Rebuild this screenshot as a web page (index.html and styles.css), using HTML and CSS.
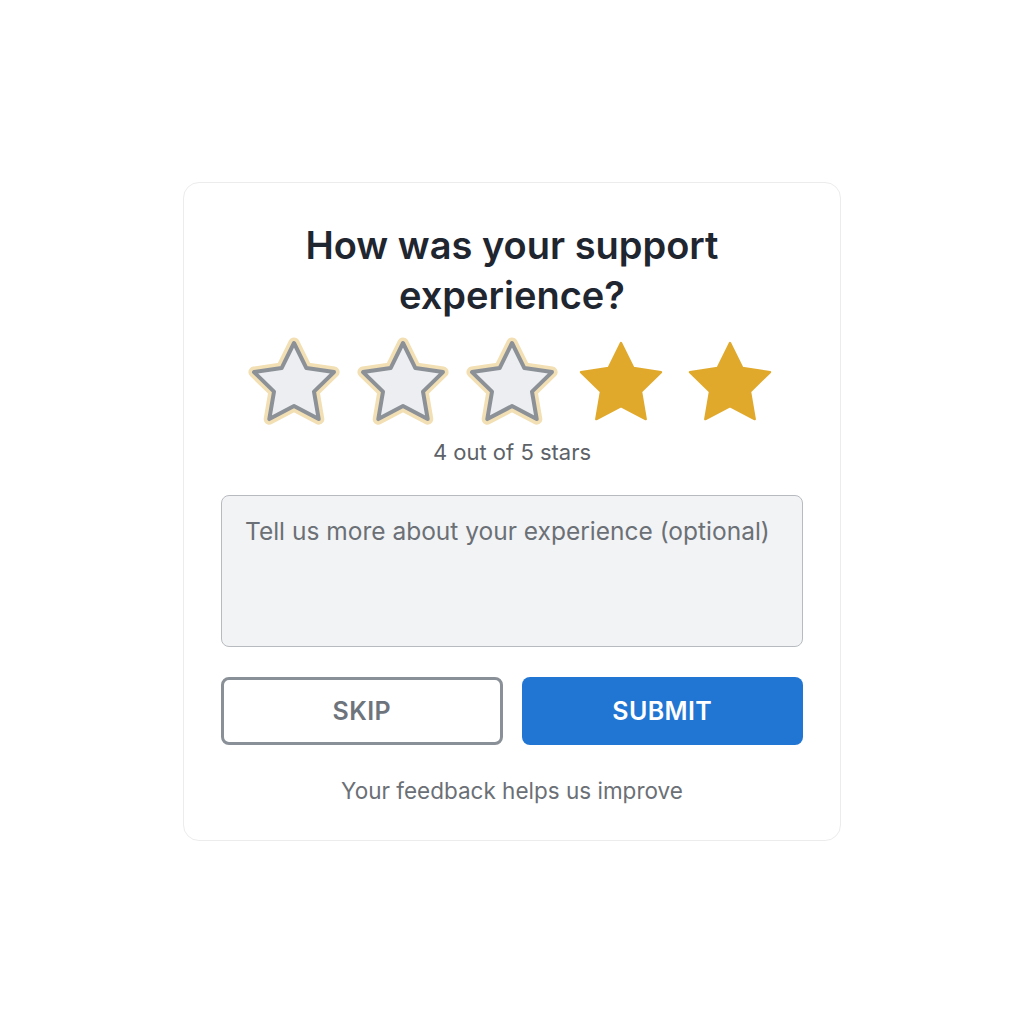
FILE: index.html
```html
<!DOCTYPE html>
<html lang="en">
<head>
  <meta charset="UTF-8" />
  <meta name="viewport" content="width=device-width, initial-scale=1" />
  <title>Support Feedback</title>
  <link rel="stylesheet" href="styles.css">
</head>
<body>
  <div class="card">
    <h1>How was your support<br>experience?</h1>

    <div class="stars">
      <svg class="star empty" viewBox="0 0 24 24"><path class="halo" d="M12 2l3.09 6.26L22 9.27l-5 4.87 1.18 6.88L12 17.77l-6.18 3.25L7 14.14 2 9.27l6.91-1.01L12 2z"/><path class="line" d="M12 2l3.09 6.26L22 9.27l-5 4.87 1.18 6.88L12 17.77l-6.18 3.25L7 14.14 2 9.27l6.91-1.01L12 2z"/></svg>
      <svg class="star empty" viewBox="0 0 24 24"><path class="halo" d="M12 2l3.09 6.26L22 9.27l-5 4.87 1.18 6.88L12 17.77l-6.18 3.25L7 14.14 2 9.27l6.91-1.01L12 2z"/><path class="line" d="M12 2l3.09 6.26L22 9.27l-5 4.87 1.18 6.88L12 17.77l-6.18 3.25L7 14.14 2 9.27l6.91-1.01L12 2z"/></svg>
      <svg class="star empty" viewBox="0 0 24 24"><path class="halo" d="M12 2l3.09 6.26L22 9.27l-5 4.87 1.18 6.88L12 17.77l-6.18 3.25L7 14.14 2 9.27l6.91-1.01L12 2z"/><path class="line" d="M12 2l3.09 6.26L22 9.27l-5 4.87 1.18 6.88L12 17.77l-6.18 3.25L7 14.14 2 9.27l6.91-1.01L12 2z"/></svg>
      <svg class="star full" viewBox="0 0 24 24"><path d="M12 2l3.09 6.26L22 9.27l-5 4.87 1.18 6.88L12 17.77l-6.18 3.25L7 14.14 2 9.27l6.91-1.01L12 2z"/></svg>
      <svg class="star full" viewBox="0 0 24 24"><path d="M12 2l3.09 6.26L22 9.27l-5 4.87 1.18 6.88L12 17.77l-6.18 3.25L7 14.14 2 9.27l6.91-1.01L12 2z"/></svg>
    </div>
    <p class="rating-label">4 out of 5 stars</p>

    <textarea placeholder="Tell us more about your experience (optional)"></textarea>

    <div class="actions">
      <button class="btn-skip">SKIP</button>
      <button class="btn-submit">SUBMIT</button>
    </div>

    <p class="note">Your feedback helps us improve</p>
  </div>
</body>
</html>
```

FILE: styles.css
```css
body {
  margin: 0;
  background-color: #fff;
  font-family: Inter, "Noto Sans", Arial, sans-serif;
}

.card {
  box-sizing: border-box;
  width: 658px;
  margin: 182px auto 0;
  padding: 37px 37px 35px;
  border: 1px solid #ececec;
  border-radius: 16px;
  background-color: #fff;
  text-align: center;
}

h1 {
  margin: 0;
  font-size: 38px;
  line-height: 50px;
  font-weight: 600;
  color: #1f2630;
}

.stars {
  display: flex;
  justify-content: center;
  gap: 13px;
  margin-top: 15px;
}

.star {
  width: 96px;
  height: 96px;
}

.star.full path {
  fill: #e1a92c;
  stroke: #e1a92c;
  stroke-width: 0.6;
  stroke-linejoin: round;
}

.star.empty .halo {
  fill: none;
  stroke: #f2dfb3;
  stroke-width: 2.8;
  stroke-linejoin: round;
}

.star.empty .line {
  fill: #eceef1;
  stroke: #8c9198;
  stroke-width: 1;
  stroke-linejoin: round;
}

.rating-label {
  margin: 9px 0 0;
  font-size: 22px;
  line-height: 24px;
  color: #5d6268;
}

textarea {
  display: block;
  box-sizing: border-box;
  width: 100%;
  height: 152px;
  margin-top: 31px;
  padding: 20px 23px;
  border: 1.5px solid #b7bbc0;
  border-radius: 8px;
  background-color: #f2f3f5;
  font-family: inherit;
  font-size: 24.5px;
  line-height: 30px;
  resize: none;
}

textarea::placeholder {
  color: #6b7076;
}

.actions {
  display: grid;
  grid-template-columns: 1fr 1fr;
  gap: 19px;
  margin-top: 30px;
}

.actions button {
  box-sizing: border-box;
  height: 68px;
  padding: 0;
  border-radius: 8px;
  font-family: inherit;
  font-size: 25px;
  font-weight: 600;
  letter-spacing: 0.4px;
  cursor: pointer;
}

.btn-skip {
  background-color: #fff;
  border: 3px solid #8a9097;
  color: #6e747b;
}

.btn-submit {
  background-color: #2176d3;
  border: none;
  color: #fff;
}

.note {
  margin: 32px 0 0;
  font-size: 22.5px;
  line-height: 28px;
  color: #6b7076;
}
```
